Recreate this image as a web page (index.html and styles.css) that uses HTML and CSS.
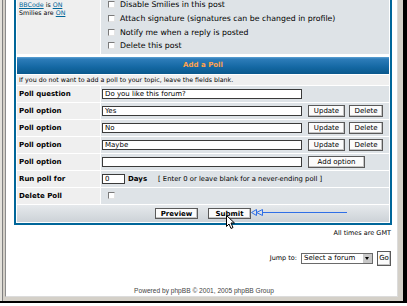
FILE: index.html
```html
<!DOCTYPE html>
<html lang="en">
<head>
  <meta charset="UTF-8" />
  <title>Post a new topic - Add a Poll</title>
  <link rel="stylesheet" href="styles.css">
</head>
<body>
  <div class="screen">
    <div class="window">
      <div class="page">
        <table class="forumline">
          <tr>
            <td class="row1 opt-label gensmall"><a href="#">BBCode</a> is <a href="#">ON</a><br>Smilies are <a href="#">ON</a></td>
            <td class="row2 opt-list">
              <div class="opt"><span class="cb"></span>Disable Smilies in this post</div>
              <div class="opt"><span class="cb"></span>Attach signature (signatures can be changed in profile)</div>
              <div class="opt"><span class="cb"></span>Notify me when a reply is posted</div>
              <div class="opt"><span class="cb"></span>Delete this post</div>
            </td>
          </tr>
          <tr>
            <th class="thHead" colspan="2">Add a Poll</th>
          </tr>
          <tr>
            <td class="row1 explain gensmall" colspan="2">If you do not want to add a poll to your topic, leave the fields blank.</td>
          </tr>
          <tr>
            <td class="row1 label">Poll question</td>
            <td class="row2"><div class="field"><input class="post" type="text" value="Do you like this forum?"></div></td>
          </tr>
          <tr>
            <td class="row1 label">Poll option</td>
            <td class="row2"><div class="field"><input class="post" type="text" value="Yes"><button class="btn upd">Update</button><button class="btn del">Delete</button></div></td>
          </tr>
          <tr>
            <td class="row1 label">Poll option</td>
            <td class="row2"><div class="field"><input class="post" type="text" value="No"><button class="btn upd">Update</button><button class="btn del">Delete</button></div></td>
          </tr>
          <tr>
            <td class="row1 label">Poll option</td>
            <td class="row2"><div class="field"><input class="post" type="text" value="Maybe"><button class="btn upd">Update</button><button class="btn del">Delete</button></div></td>
          </tr>
          <tr>
            <td class="row1 label">Poll option</td>
            <td class="row2"><div class="field"><input class="post" type="text" value=""><button class="btn add">Add option</button></div></td>
          </tr>
          <tr>
            <td class="row1 label">Run poll for</td>
            <td class="row2"><div class="field"><input class="post days-input" type="text" value="0"><b class="days">Days</b><span class="hint">[ Enter 0 or leave blank for a never-ending poll ]</span></div></td>
          </tr>
          <tr>
            <td class="row1 label">Delete Poll</td>
            <td class="row2"><div class="field"><span class="cb"></span></div></td>
          </tr>
          <tr>
            <td class="catBottom" colspan="2"><div class="actions"><button class="btn main">Preview</button><button class="btn main">Submit</button></div></td>
          </tr>
        </table>

        <div class="times">All times are GMT</div>

        <div class="jump">
          <span>Jump to:</span>
          <span class="select">Select a forum<span class="drop"></span></span>
          <button class="btn go">Go</button>
        </div>

        <div class="copyright">Powered by phpBB &copy; 2001, 2005 phpBB Group</div>
      </div>
    </div>

    <!-- annotation drawn over the screenshot -->
    <svg class="overlay" width="407" height="306" viewBox="0 0 407 306">
      <g fill="none" stroke="#2f6fe6" stroke-width="1">
        <line x1="262" y1="212.5" x2="347" y2="212.5" />
        <path d="M251.5 212.5 L256.5 209.5 L256.5 215.5 Z" />
        <path d="M256.5 212.5 L262.5 209.5 L262.5 215.5 Z" />
      </g>
      <path d="M226.5 215.5 L226.5 226.5 L229 224 L231 228.5 L233 227.5 L231 223 L234.5 223 Z"
            fill="#fff" stroke="#000" stroke-width="1" stroke-linejoin="round" />
    </svg>
  </div>
</body>
</html>
```

FILE: styles.css
```css
body {
  margin: 0;
  background: #ffffff;
  font-family: "DejaVu Sans", Verdana, sans-serif;
  color: #000000;
}

.screen {
  position: relative;
  width: 407px;
  height: 306px;
  overflow: hidden;
}

/* browser window frame */
.window {
  width: 393px;
  height: 297px;
  padding: 0 5px 4px 5px;
  background: #d4d0c8;
  border-right: 4px solid #000000;
  border-bottom: 2px solid #000000;
  box-shadow: inset 2px 0 0 #e4e2dc, inset 3px 0 0 #808080;
}

.page {
  box-sizing: border-box;
  height: 297px;
  background: #ffffff;
  border-left: 1px solid #8c8c8c;
  border-right: 1px solid #dcdcdc;
  border-bottom: 1px solid #dcdcdc;
  overflow: hidden;
}

a {
  color: #006699;
}

.gensmall {
  font-size: 6.3px;
}

/* phpBB forum table */
.forumline {
  width: 378px;
  margin: -5px 0 0 8px;
  border: 2px solid #006699;
  border-spacing: 1px;
  background: #ffffff;
  font-size: 7px;
}

.forumline td,
.forumline th {
  padding: 0;
}

.row1 {
  background: #efefef;
}

.row2 {
  background: #dee3e7;
}

.opt-label {
  width: 81px;
  vertical-align: top;
  padding: 3px 0 0 2px !important;
  line-height: 8px;
}

.opt-list {
  padding: 0 0 1.3px 7px !important;
}

.opt {
  display: flex;
  align-items: center;
  height: 13.67px;
  font-size: 7.8px;
  white-space: nowrap;
}

.cb {
  display: inline-block;
  flex: none;
  box-sizing: border-box;
  width: 7px;
  height: 7px;
  margin-right: 5px;
  background: #ffffff;
  border: 1px solid;
  border-color: #7a7a7a #e4e4e4 #e4e4e4 #7a7a7a;
}

.thHead {
  line-height: 17px;
  border-top: 2px solid #ffffff;
  background: linear-gradient(#5fa3d4 0, #2d7cb9 2px, #1468a3 60%, #0a588c 100%);
  color: #ffa34f;
  font-size: 7px;
  font-weight: bold;
}

.explain {
  line-height: 10px;
  padding-left: 2px !important;
  white-space: nowrap;
}

.label {
  line-height: 16px;
  padding-left: 2px !important;
  font-weight: bold;
  white-space: nowrap;
}

.field {
  display: flex;
  align-items: center;
  height: 16px;
  padding-left: 1px;
  white-space: nowrap;
}

.field > .cb {
  margin-left: 6px;
}

input.post {
  box-sizing: border-box;
  width: 200px;
  height: 10px;
  margin: 0;
  padding: 0 2px;
  border: 1px solid #3a3a3a;
  background: #ffffff;
  font-family: "DejaVu Sans", Verdana, sans-serif;
  font-size: 7px;
  color: #000000;
  outline: none;
}

input.days-input {
  width: 23px;
}

.days {
  margin-left: 3px;
}

.hint {
  margin-left: 11px;
  font-size: 6.8px;
}

.btn {
  box-sizing: border-box;
  height: 12px;
  margin: 0;
  padding: 0;
  border: 1px solid #5a5a5a;
  background: #fbfbfb;
  box-shadow: inset -1px -1px 0 #c4c4c4;
  font-family: "DejaVu Sans", Verdana, sans-serif;
  font-size: 7px;
  line-height: 10px;
  color: #000000;
}

.upd {
  width: 37px;
  margin-left: 6px;
}

.del {
  width: 34px;
  margin-left: 4px;
}

.add {
  width: 57px;
  margin-left: 6px;
}

.catBottom {
  background: linear-gradient(#e6e9ec, #ccd2d7);
}

.actions {
  display: flex;
  justify-content: center;
  align-items: center;
  gap: 10px;
  height: 17px;
}

.actions .main {
  width: 43px;
  height: 11px;
  font-weight: bold;
}

/* footer */
.times {
  margin: 4px 6px 0 0;
  line-height: 9px;
  text-align: right;
  font-size: 6.5px;
}

.jump {
  display: flex;
  justify-content: flex-end;
  align-items: center;
  gap: 4px;
  height: 15px;
  margin: 13px 6px 0 0;
  font-size: 6.5px;
}

.select {
  position: relative;
  box-sizing: border-box;
  width: 72px;
  height: 11px;
  padding-left: 2px;
  border: 1px solid #6a6a6a;
  background: #ffffff;
  font-size: 7px;
  line-height: 9px;
}

.drop {
  position: absolute;
  right: 0;
  top: 0;
  width: 9px;
  height: 9px;
  background: #c8c8c8;
}

.drop::after {
  content: "";
  position: absolute;
  left: 2px;
  top: 3px;
  border-left: 2.5px solid transparent;
  border-right: 2.5px solid transparent;
  border-top: 3px solid #000000;
}

.go {
  width: 14px;
  height: 15px;
  font-size: 7px;
}

.copyright {
  margin-top: 21px;
  padding-left: 5px;
  line-height: 8px;
  text-align: center;
  font-family: "Liberation Sans", Arial, sans-serif;
  font-size: 6.6px;
  color: #444444;
}

.overlay {
  position: absolute;
  left: 0;
  top: 0;
  pointer-events: none;
}
```
